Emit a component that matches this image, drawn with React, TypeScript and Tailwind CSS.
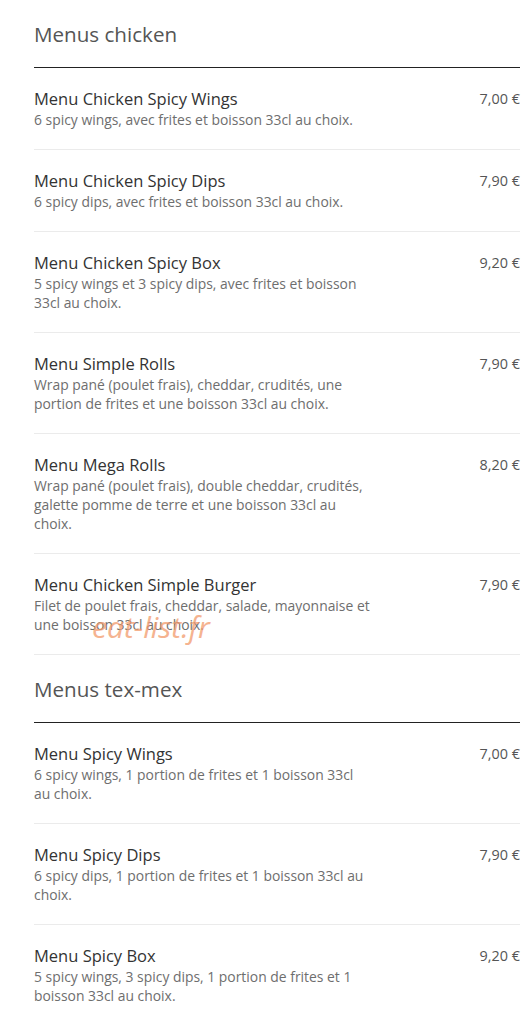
import React from "react";

type Item = { name: string; desc: string; price: string };

const chicken: Item[] = [
  { name: "Menu Chicken Spicy Wings", desc: "6 spicy wings, avec frites et boisson 33cl au choix.", price: "7,00 €" },
  { name: "Menu Chicken Spicy Dips", desc: "6 spicy dips, avec frites et boisson 33cl au choix.", price: "7,90 €" },
  { name: "Menu Chicken Spicy Box", desc: "5 spicy wings et 3 spicy dips, avec frites et boisson 33cl au choix.", price: "9,20 €" },
  { name: "Menu Simple Rolls", desc: "Wrap pané (poulet frais), cheddar, crudités, une portion de frites et une boisson 33cl au choix.", price: "7,90 €" },
  { name: "Menu Mega Rolls", desc: "Wrap pané (poulet frais), double cheddar, crudités, galette pomme de terre et une boisson 33cl au choix.", price: "8,20 €" },
  { name: "Menu Chicken Simple Burger", desc: "Filet de poulet frais, cheddar, salade, mayonnaise et une boisson 33cl au choix.", price: "7,90 €" },
];

const texmex: Item[] = [
  { name: "Menu Spicy Wings", desc: "6 spicy wings, 1 portion de frites et 1 boisson 33cl au choix.", price: "7,00 €" },
  { name: "Menu Spicy Dips", desc: "6 spicy dips, 1 portion de frites et 1 boisson 33cl au choix.", price: "7,90 €" },
  { name: "Menu Spicy Box", desc: "5 spicy wings, 3 spicy dips, 1 portion de frites et 1 boisson 33cl au choix.", price: "9,20 €" },
];

function Row({ item, watermark }: { item: Item; watermark?: boolean }) {
  return (
    <div className="relative flex justify-between border-b border-[#ebebeb] pt-[20px] pb-[20px]">
      <div className="w-[338px]">
        <div className="text-[16.5px] leading-[22px] text-[#333]">{item.name}</div>
        <div className="text-[13.9px] leading-[19px] text-[#6e6e6e]">{item.desc}</div>
      </div>
      <div className="text-[14.4px] leading-[22px] text-[#555] whitespace-nowrap">{item.price}</div>
      {watermark && (
        <div className="pointer-events-none absolute left-[58px] top-[55px] text-[30px] italic leading-[36px] text-[#f29a6c] opacity-75">
          eat-list.fr
        </div>
      )}
    </div>
  );
}

function Section({ title, items }: { title: string; items: Item[] }) {
  return (
    <div>
      <div className="border-b border-[#222] pt-[22px] pb-[21px]">
        <h2 className="text-[20.6px] leading-[24px] text-[#555]">{title}</h2>
      </div>
      {items.map((it, i) => (
        <Row key={i} item={it} watermark={title === "Menus chicken" && i === 5} />
      ))}
    </div>
  );
}

export default function App() {
  return (
    <div className="min-h-[1024px] bg-white pl-[34px] pr-[6px]" style={{ fontFamily: '"Open Sans", sans-serif' }}>
      <Section title="Menus chicken" items={chicken} />
      <Section title="Menus tex-mex" items={texmex} />
    </div>
  );
}
